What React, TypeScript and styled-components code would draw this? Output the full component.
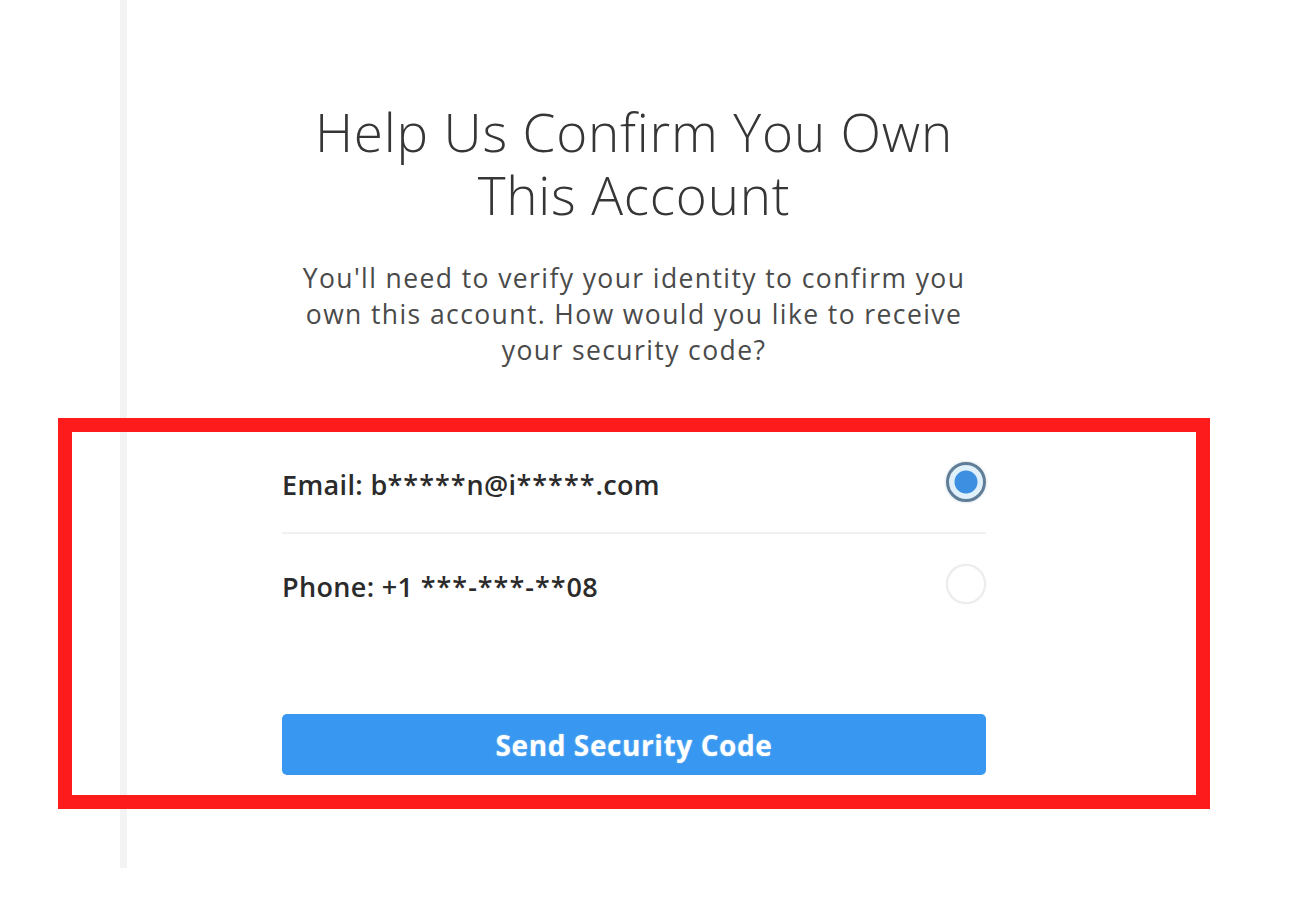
import React from "react";
import styled, { createGlobalStyle } from "styled-components";

const GlobalStyle = createGlobalStyle`
  html, body {
    margin: 0;
    padding: 0;
    background: #ffffff;
  }
  body {
    font-family: "Open Sans", "Noto Sans", sans-serif;
    color: #262626;
  }
`;

const Page = styled.div`
  position: relative;
  width: 1300px;
  height: 900px;
  display: flex;
  overflow: hidden;
  background: #ffffff;
`;

const Gutter = styled.div`
  width: 120px;
  flex: none;
`;

const Panel = styled.main`
  height: 868px;
  flex: none;
  width: 1030px;
  border-left: 7px solid #f3f3f3;
  box-sizing: border-box;
  padding: 100px 0 0 155px;
`;

const Column = styled.section`
  width: 704px;
  display: flex;
  flex-direction: column;
`;

const Title = styled.h1`
  margin: 0;
  display: flex;
  flex-direction: column;
  align-items: center;
  font-family: "Open Sans", sans-serif;
  font-weight: 300;
  font-size: 53px;
  color: #363636;
  letter-spacing: 0.8px;
`;

const TitleLine = styled.span`
  display: block;
  height: 63px;
  line-height: 63px;
  white-space: nowrap;
`;

const Lead = styled.p`
  margin: 34px 0 0;
  font-family: "Open Sans", sans-serif;
  font-weight: 400;
  font-size: 26.5px;
  line-height: 36px;
  color: #4a4a4a;
  text-align: center;
  white-space: nowrap;
  letter-spacing: 1.4px;
`;

const Options = styled.div`
  margin-top: 64px;
  display: flex;
  flex-direction: column;
`;

const OptionRow = styled.label<{ $divided?: boolean }>`
  height: 100px;
  display: flex;
  align-items: center;
  justify-content: space-between;
  border-bottom: ${(p) => (p.$divided ? "2px solid #f0f0f0" : "none")};
  cursor: pointer;
`;

const OptionText = styled.span`
  font-family: "Open Sans", sans-serif;
  font-weight: 600;
  font-size: 27px;
  color: #2b2b2b;
  letter-spacing: 0.35px;
  padding-top: 4px;
`;

const Mask = styled.span`
  letter-spacing: 1px;
`;

const Radio = styled.span<{ $checked?: boolean }>`
  width: 40px;
  height: 40px;
  box-sizing: border-box;
  border-radius: 50%;
  flex: none;
  border: ${(p) => (p.$checked ? "3px solid #5f7d96" : "2px solid #ececec")};
  background: ${(p) =>
    p.$checked
      ? "radial-gradient(circle, #3d8fe2 0 11px, #dff0fb 12px 100%)"
      : "#ffffff"};
  box-shadow: ${(p) =>
    p.$checked ? "0 0 3px rgba(95,125,150,0.35)" : "0 0 2px rgba(0,0,0,0.05)"};
`;

const SendButton = styled.button`
  margin-top: 80px;
  width: 704px;
  height: 61px;
  border: none;
  border-radius: 5px;
  background: #3897f0;
  color: #ffffff;
  font-family: "Open Sans", sans-serif;
  font-weight: 700;
  font-size: 28px;
  letter-spacing: 0.6px;
  cursor: pointer;
  text-shadow: 0 0 2px rgba(200, 235, 255, 0.6);
`;

const Annotation = styled.div`
  position: absolute;
  left: 58px;
  top: 418px;
  width: 1152px;
  height: 391px;
  box-sizing: border-box;
  border: 14px solid #fe1b1b;
  pointer-events: none;
`;

export default function App() {
  return (
    <>
      <GlobalStyle />
      <Page>
        <Gutter />
        <Panel>
          <Column>
            <Title>
              <TitleLine>Help Us Confirm You Own</TitleLine>
              <TitleLine>This Account</TitleLine>
            </Title>
            <Lead>
              You'll need to verify your identity to confirm you
              <br />
              own this account. How would you like to receive
              <br />
              your security code?
            </Lead>
            <Options>
              <OptionRow $divided>
                <OptionText>
                  Email: b<Mask>*****</Mask>n@i<Mask>*****</Mask>.com
                </OptionText>
                <Radio $checked />
              </OptionRow>
              <OptionRow>
                <OptionText>
                  Phone: +1 <Mask>***-***-**</Mask>08
                </OptionText>
                <Radio />
              </OptionRow>
            </Options>
            <SendButton type="button">Send Security Code</SendButton>
          </Column>
        </Panel>
        <Annotation />
      </Page>
    </>
  );
}
